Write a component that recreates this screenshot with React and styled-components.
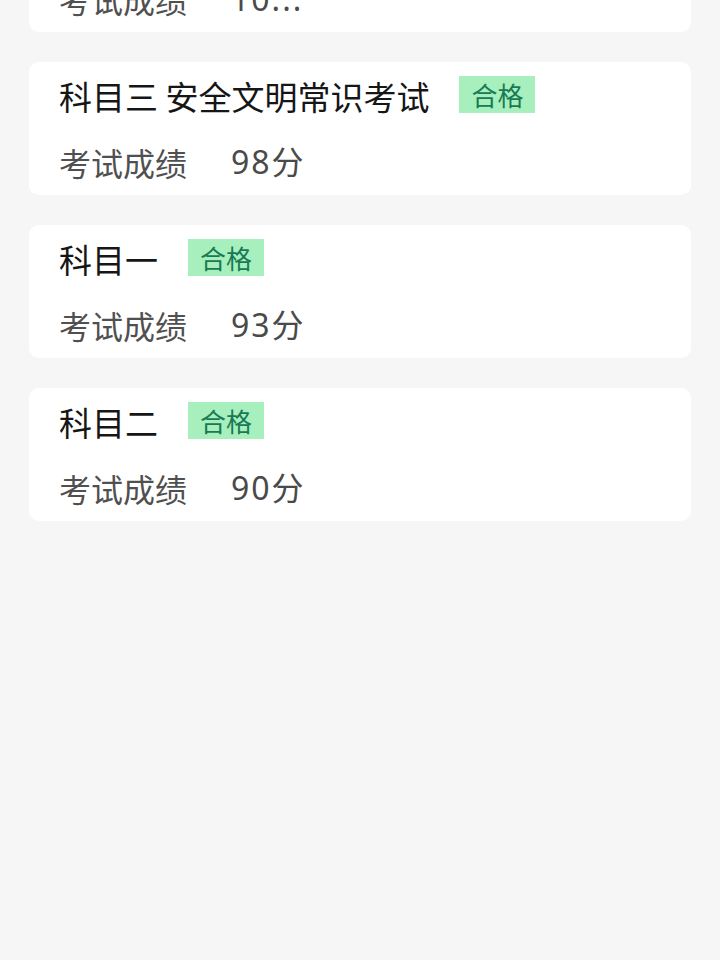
import React from "react";
import styled, { createGlobalStyle } from "styled-components";

const GlobalStyle = createGlobalStyle`
  html, body {
    margin: 0;
    padding: 0;
    background: #f6f6f6;
    font-family: "Noto Sans CJK SC", "Noto Sans", sans-serif;
  }
  #root {
    min-height: 960px;
    overflow: hidden;
  }
`;

const Page = styled.div`
  width: 720px;
  min-height: 960px;
  background: #f6f6f6;
  overflow: hidden;
`;

const List = styled.div`
  display: flex;
  flex-direction: column;
  gap: 30px;
  padding: 0 29px;
  margin-top: -101px;
`;

const Card = styled.div`
  box-sizing: border-box;
  height: 133px;
  background: #ffffff;
  border-radius: 10px;
  padding: 14px 30px 0 30px;
  display: flex;
  flex-direction: column;
`;

const TitleRow = styled.div`
  display: flex;
  align-items: center;
  height: 37px;
`;

const Title = styled.div`
  font-size: 33px;
  line-height: 37px;
  color: #161616;
  padding-top: 4px;
  white-space: pre;
`;

const Badge = styled.span`
  display: inline-flex;
  align-items: center;
  justify-content: center;
  box-sizing: border-box;
  height: 37px;
  padding: 0 12px;
  margin-left: 30px;
  background: #a7efbd;
  color: #177a55;
  font-size: 26px;
  line-height: 1;
`;

const ScoreRow = styled.div`
  display: flex;
  align-items: center;
  margin-top: 27px;
  height: 44px;
  font-size: 32px;
  line-height: 44px;
  color: #505050;
`;

const Label = styled.span`
  margin-right: 44px;
`;

const Value = styled.span`
  font-family: "Noto Sans", "Noto Sans CJK SC", sans-serif;
  letter-spacing: 2px;
  color: #4a4a4a;
`;

const items = [
  { title: "科目四", pass: true, score: "10..." },
  { title: "科目三 安全文明常识考试", pass: true, score: "98分" },
  { title: "科目一", pass: true, score: "93分" },
  { title: "科目二", pass: true, score: "90分" },
];

export default function App() {
  return (
    <Page>
      <GlobalStyle />
      <List>
        {items.map((it, i) => (
          <Card key={i}>
            <TitleRow>
              <Title>{it.title}</Title>
              {it.pass && <Badge>合格</Badge>}
            </TitleRow>
            <ScoreRow>
              <Label>考试成绩</Label>
              <Value>{it.score}</Value>
            </ScoreRow>
          </Card>
        ))}
      </List>
    </Page>
  );
}
